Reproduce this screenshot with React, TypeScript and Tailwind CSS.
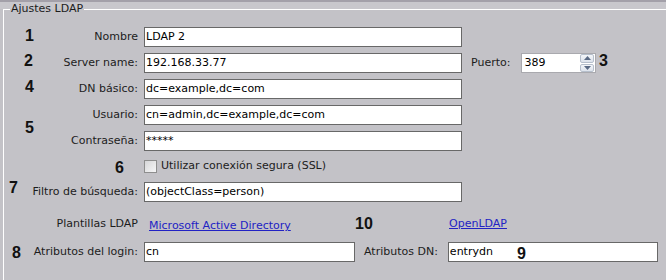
import React from 'react';

// ===========================================
// LDAP settings panel (annotated screenshot)
// ===========================================

const font = { fontFamily: '"DejaVu Sans", Verdana, sans-serif' };

interface FieldProps {
  value: string;
  width: string;
}

const Field: React.FC<FieldProps> = ({ value, width }) => (
  <div
    className={`${width} h-[20px] flex items-center bg-white border border-[#686868] pl-[1px] text-[11px] text-black whitespace-nowrap overflow-hidden`}
  >
    {value}
  </div>
);

const Label: React.FC<{ text: string }> = ({ text }) => (
  <div className="w-[134px] text-right text-[11px] text-[#1c1c1c] whitespace-nowrap">{text}</div>
);

// Spinner used for the port value
const PortSpinner: React.FC = () => (
  <div className="w-[75px] h-[20px] flex items-center justify-between bg-white border border-[#a9a9ae] pl-[2px] pr-[1px] text-[11px] text-black">
    <span>389</span>
    <div className="flex flex-col w-[14px] h-[18px] gap-[1px]">
      <div className="flex-1 flex items-center justify-center rounded-[2px] border border-[#b6bfcc] bg-[linear-gradient(to_bottom,#f3f5f9,#dde3ec)]">
        <svg width="7" height="4" viewBox="0 0 7 4">
          <path d="M0 4 L3.5 0 L7 4 Z" fill="#5a6a84" />
        </svg>
      </div>
      <div className="flex-1 flex items-center justify-center rounded-[2px] border border-[#b6bfcc] bg-[linear-gradient(to_bottom,#f3f5f9,#dde3ec)]">
        <svg width="7" height="4" viewBox="0 0 7 4">
          <path d="M0 0 L7 0 L3.5 4 Z" fill="#5a6a84" />
        </svg>
      </div>
    </div>
  </div>
);

// Bold annotation numbers laid over the screenshot
const Marker: React.FC<{ n: string; className: string }> = ({ n, className }) => (
  <span
    className={`absolute text-[16px] leading-none font-bold text-[#111] ${className}`}
    style={{ fontFamily: '"Liberation Sans", Arial, sans-serif' }}
  >
    {n}
  </span>
);

export default function App() {
  return (
    <div className="relative w-[666px] h-[280px] overflow-hidden bg-[#c3c2c7]" style={font}>
      {/* top strip */}
      <div className="h-[2px] bg-[#a3a0a9]" />

      {/* group box header */}
      <div className="flex h-[14px] bg-[linear-gradient(to_bottom,#c8c7cc_0px,#c8c7cc_7px,#c3c2c7_7px)]">
        <div className="w-[3px]" />
        <div className="mt-[7px] w-[7px] h-[7px] border-l border-t border-white" />
        <span className="px-[1px] text-[11px] leading-[14px] text-[#1c1c1c]">Ajustes LDAP</span>
        <div className="mt-[7px] h-px flex-1 bg-white" />
      </div>

      {/* group box body */}
      <div className="ml-[3px] h-[264px] border-l border-white pt-[11px]">
        <div className="flex flex-col gap-[6px]">
          <div className="flex items-center gap-[6px]">
            <Label text="Nombre" />
            <Field value="LDAP 2" width="w-[318px]" />
          </div>
          <div className="flex items-center">
            <Label text="Server name:" />
            <div className="ml-[6px]">
              <Field value="192.168.33.77" width="w-[318px]" />
            </div>
            <span className="ml-[9px] text-[11px] text-[#1c1c1c]">Puerto:</span>
            <div className="ml-[11px]">
              <PortSpinner />
            </div>
          </div>
          <div className="flex items-center gap-[6px]">
            <Label text="DN básico:" />
            <Field value="dc=example,dc=com" width="w-[318px]" />
          </div>
          <div className="flex items-center gap-[6px]">
            <Label text="Usuario:" />
            <Field value="cn=admin,dc=example,dc=com" width="w-[318px]" />
          </div>
          <div className="flex items-center gap-[6px]">
            <Label text="Contraseña:" />
            <Field value="*****" width="w-[318px]" />
          </div>
        </div>

        {/* SSL checkbox */}
        <div className="mt-[9px] flex items-center h-[13px]">
          <div className="w-[140px]" />
          <div className="w-[13px] h-[13px] border border-[#8e8e8e] bg-[linear-gradient(135deg,#d6d6d8,#f6f6f7)]" />
          <span className="ml-[4px] text-[11px] text-[#1c1c1c]">Utilizar conexión segura (SSL)</span>
        </div>

        <div className="mt-[9px] flex items-center gap-[6px]">
          <Label text="Filtro de búsqueda:" />
          <Field value="(objectClass=person)" width="w-[318px]" />
        </div>

        {/* templates */}
        <div className="mt-[12px] h-[20px] flex items-center">
          <Label text="Plantillas LDAP" />
          <div className="ml-[11px] w-[300px]">
            <span className="text-[11px] text-[#2222c4] underline">Microsoft Active Directory</span>
          </div>
          <span className="text-[11px] text-[#2222c4] underline">OpenLDAP</span>
        </div>

        <div className="mt-[8px] flex items-center">
          <Label text="Atributos del login:" />
          <div className="ml-[6px]">
            <Field value="cn" width="w-[211px]" />
          </div>
          <span className="ml-[9px] text-[11px] text-[#1c1c1c]">Atributos DN:</span>
          <div className="ml-[10px]">
            <Field value="entrydn" width="w-[210px]" />
          </div>
        </div>
      </div>

      <Marker n="1" className="left-[25px] top-[28px]" />
      <Marker n="2" className="left-[24px] top-[53px]" />
      <Marker n="3" className="left-[599px] top-[53px]" />
      <Marker n="4" className="left-[25px] top-[79px]" />
      <Marker n="5" className="left-[25px] top-[120px]" />
      <Marker n="6" className="left-[115px] top-[160px]" />
      <Marker n="7" className="left-[9px] top-[180px]" />
      <Marker n="10" className="left-[355px] top-[216px]" />
      <Marker n="8" className="left-[12px] top-[245px]" />
      <Marker n="9" className="left-[517px] top-[246px]" />
    </div>
  );
}
